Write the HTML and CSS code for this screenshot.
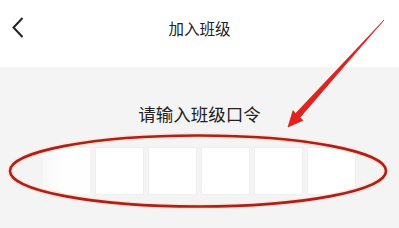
FILE: index.html
```html
<!DOCTYPE html>
<html lang="zh">
<head>
<meta charset="utf-8">
<link rel="stylesheet" href="styles.css">
</head>
<body>
<div class="page">
  <header class="topbar">
    <span class="back">
      <svg width="12" height="21" viewBox="0 0 12 21"><path d="M10.5 1 L1.5 10.5 L10.5 20" fill="none" stroke="#222" stroke-width="2"/></svg>
    </span>
    <h1 class="title">加入班级</h1>
  </header>
  <main class="content">
    <p class="prompt">请输入班级口令</p>
    <div class="codes">
      <div class="code faded"></div>
      <div class="code"></div>
      <div class="code"></div>
      <div class="code"></div>
      <div class="code"></div>
      <div class="code"></div>
    </div>
  </main>
  <svg class="annot" width="399" height="228" viewBox="0 0 399 228">
    <ellipse cx="198" cy="171" rx="188" ry="35.5" fill="none" stroke="#fde4d8" stroke-width="5.5"/>
    <ellipse cx="198" cy="171" rx="188" ry="35.5" fill="none" stroke="#ad1f1b" stroke-width="2.6"/>
    <polygon points="384,20 300,117.4 303,120.4 288,127 293,110.6 295.6,113.4" fill="#e3211d" stroke="#c41a16" stroke-width="0.6" stroke-linejoin="round"/>
  </svg>
</div>
</body>
</html>
```
FILE: styles.css
```css
html, body {
  margin: 0;
  padding: 0;
}
body {
  font-family: "Noto Sans CJK SC", "Noto Sans", sans-serif;
  background: #f4f4f4;
  color: #222;
}
.page {
  position: relative;
  width: 399px;
  height: 228px;
  overflow: hidden;
}
.topbar {
  height: 67px;
  background: #fff;
  display: flex;
  align-items: center;
  justify-content: center;
  position: relative;
}
.back {
  position: absolute;
  left: 12px;
  top: 17px;
  display: flex;
}
.title {
  margin: 0 0 12px 0;
  font-size: 15.5px;
  font-weight: normal;
  color: #222;
  line-height: 20px;
}
.content {
  display: flex;
  flex-direction: column;
  align-items: center;
}
.prompt {
  margin: 35px 0 0 0;
  font-size: 17.5px;
  line-height: 24px;
  color: #222;
}
.codes {
  margin-top: 22px;
  display: flex;
  gap: 6px;
  padding-right: 2px;
}
.code {
  width: 47px;
  height: 46px;
  background: #fff;
  box-shadow: 0 0 0 1px #efefef;
}
.code.faded {
  background: linear-gradient(90deg, #f8f8f8, #fdfdfd 40%, #fff);
  box-shadow: none;
}
.annot {
  position: absolute;
  left: 0;
  top: 0;
  pointer-events: none;
}
```
